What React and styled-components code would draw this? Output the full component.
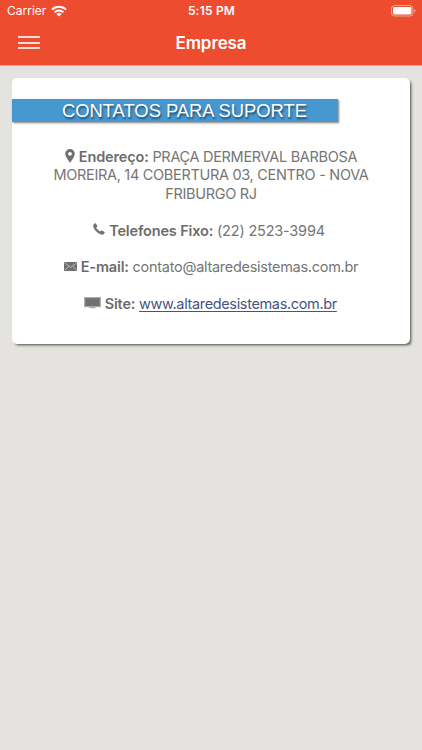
import styled, { createGlobalStyle } from "styled-components";

function App() {
  return (
    <>
      <GlobalStyle />
      <Header>
        <StatusBar>
          <Carrier>
            <span>Carrier</span>
            <WifiIcon />
          </Carrier>
          <Clock>5:15 PM</Clock>
          <BatteryIcon />
        </StatusBar>
        <NavBar>
          <MenuButton aria-label="Menu">
            <MenuLine />
            <MenuLine />
            <MenuLine />
          </MenuButton>
          <Title>Empresa</Title>
        </NavBar>
      </Header>

      <Content>
        <Card>
          <Banner>CONTATOS PARA SUPORTE</Banner>
          <Contact>
            <Line $track={-0.31}>
              <PinIcon />
              <b>Endereço:</b> PRAÇA DERMERVAL BARBOSA
            </Line>
            <Line $track={-0.31}>MOREIRA, 14 COBERTURA 03, CENTRO - NOVA</Line>
            <Line $track={-0.31}>FRIBURGO RJ</Line>
          </Contact>
          <Contact>
            <Line $track={-0.2} $end={4}>
              <PhoneIcon />
              <b>Telefones Fixo:</b> (22) 2523-3994
            </Line>
          </Contact>
          <Contact>
            <Line $track={-0.28}>
              <MailIcon />
              <b>E-mail:</b> contato@altaredesistemas.com.br
            </Line>
          </Contact>
          <Contact>
            <Line $track={-0.35} $end={1}>
              <MonitorIcon />
              <b>Site:</b> <SiteLink href="#">www.altaredesistemas.com.br</SiteLink>
            </Line>
          </Contact>
        </Card>
      </Content>
    </>
  );
}

const WifiIcon = () => (
  <svg width="16" height="12" viewBox="0 0 16 12" fill="none" stroke="#fff" strokeWidth="2">
    <path d="M1 4.6a10 10 0 0 1 14 0" />
    <path d="M3.6 7.2a6.3 6.3 0 0 1 8.8 0" />
    <path d="M8 11.6 5.4 9a3.8 3.8 0 0 1 5.2 0z" fill="#fff" stroke="none" />
  </svg>
);

const BatteryIcon = () => (
  <svg width="25" height="12" viewBox="0 0 25 12">
    <rect x=".5" y=".5" width="21.5" height="10.5" rx="3" fill="none" stroke="#fff" strokeOpacity=".5" />
    <rect x="2" y="2" width="18.5" height="7.5" rx="1.4" fill="#fff" />
    <path d="M23.3 4v3.6c.8-.3 1.2-1 1.2-1.8s-.4-1.5-1.2-1.8z" fill="#fff" fillOpacity=".55" />
  </svg>
);

const PinIcon = () => (
  <Glyph width="10" height="14" viewBox="0 0 10 14" $lift={-0.5} $gap={4}>
    <path
      fillRule="evenodd"
      d="M5 0a4.8 4.8 0 0 1 4.8 4.8C9.8 8 6.6 11 5 14 3.4 11 .2 8 .2 4.8A4.8 4.8 0 0 1 5 0zm0 2.9a1.9 1.9 0 1 0 0 3.8 1.9 1.9 0 0 0 0-3.8z"
    />
  </Glyph>
);

const PhoneIcon = () => (
  <Glyph width="12" height="12" viewBox="0 0 12 12" $lift={0.5} $gap={4}>
    <path d="M.4 1.7C1.2.7 2.2-.1 2.8.4l1.5 2.3c.3.6-.1 1-.8 1.6-.4.4.1 1.2 1.5 2.500s2.100 1.800 2.600 1.400c.6-.7 1-1 1.600-.7l2.200 1.500c.7.500-.2 1.700-1.100 2.400C8.600 12.300 5.500 10.700 3.400 8.600S-.4 3.600.4 1.700z" />
  </Glyph>
);

const MailIcon = () => (
  <Glyph width="13.5" height="9" viewBox="0 0 14 10" preserveAspectRatio="none" $lift={1.6} $gap={3.5}>
    <rect width="14" height="10" rx=".8" />
    <path d="M.8 1 7 6l6.2-5M.8 9l4-4M13.2 9l-4-4" fill="none" stroke="#d5d5d5" strokeWidth=".8" />
  </Glyph>
);

const MonitorIcon = () => (
  <Glyph width="17" height="12" viewBox="0 0 17 12" $lift={0.5} $gap={3.5}>
    <rect width="17" height="10.2" rx=".5" fill="#aaa" />
    <rect x="1.4" y="1.2" width="14.2" height="7.8" />
    <path d="M5.500 10.200h6v1h-6z" fill="#999" />
  </Glyph>
);

const GlobalStyle = createGlobalStyle`
  body {
    margin: 0;
    min-height: 100vh;
    background: #e4e3df;
    font-family: Inter, "Liberation Sans", sans-serif;
  }
`;

const Header = styled.header`
  height: 65px;
  color: #fff;
  background: #ed4c2f;
  border-bottom: 1px solid #d8a79b;
`;

const StatusBar = styled.div`
  display: grid;
  grid-template-columns: 1fr auto 1fr;
  align-items: center;
  height: 21px;
  padding: 0 6px 0 7px;
  font-size: 12px;

  & > svg {
    justify-self: end;
  }
`;

const Carrier = styled.div`
  display: flex;
  align-items: center;
  gap: 5px;
`;

const Clock = styled.span`
  font-weight: 600;
  letter-spacing: 0.2px;
`;

const NavBar = styled.nav`
  display: grid;
  grid-template-columns: 60px 1fr 60px;
  align-items: center;
  height: 43px;
`;

const MenuButton = styled.button`
  display: flex;
  flex-direction: column;
  gap: 3.5px;
  width: 22px;
  margin-left: 18px;
  padding: 0;
  border: 0;
  background: none;
`;

const MenuLine = styled.span`
  height: 2px;
  background: #fbdcd5;
`;

const Title = styled.h1`
  margin: 0;
  font-size: 17px;
  font-weight: 600;
  letter-spacing: -0.1px;
  text-align: center;
`;

const Content = styled.main`
  padding: 12px 12px 0;
`;

const Card = styled.section`
  box-sizing: border-box;
  height: 266px;
  padding-top: 21px;
  border-radius: 5px;
  background: #fff;
  box-shadow: 2px 2px 3px -1px rgba(0, 0, 0, 0.7);
`;

const Banner = styled.h2`
  width: 326px;
  height: 23px;
  margin: 0 0 26px;
  padding-left: 50px;
  box-sizing: border-box;
  color: #fff;
  background: #4797d1;
  box-shadow: 1px 1px 2px rgba(0, 0, 0, 0.5);
  font: 400 18.4px/23px "Liberation Sans", Arial, sans-serif;
  letter-spacing: -0.03px;
  text-shadow: 1px 2px 2px rgba(0, 0, 0, 0.5);
  white-space: nowrap;
`;

const Contact = styled.p`
  margin: 0 0 18.4px;
  color: #757575;
  font-size: 14.5px;
  line-height: 18.4px;
  text-align: center;
`;

const Line = styled.span`
  display: block;
  padding-right: ${({ $end }) => $end || 0}px;
  white-space: nowrap;
  letter-spacing: ${({ $track }) => $track}px;

  b {
    color: #6c6c6c;
    font-weight: 600;
    letter-spacing: -0.15px;
  }
`;

const Glyph = styled.svg`
  margin-right: ${({ $gap }) => $gap}px;
  fill: #707070;
  vertical-align: ${({ $lift }) => $lift}px;
`;

const SiteLink = styled.a`
  color: #46557f;
  text-decoration: underline;
  text-underline-offset: 2px;
`;

export default App;
